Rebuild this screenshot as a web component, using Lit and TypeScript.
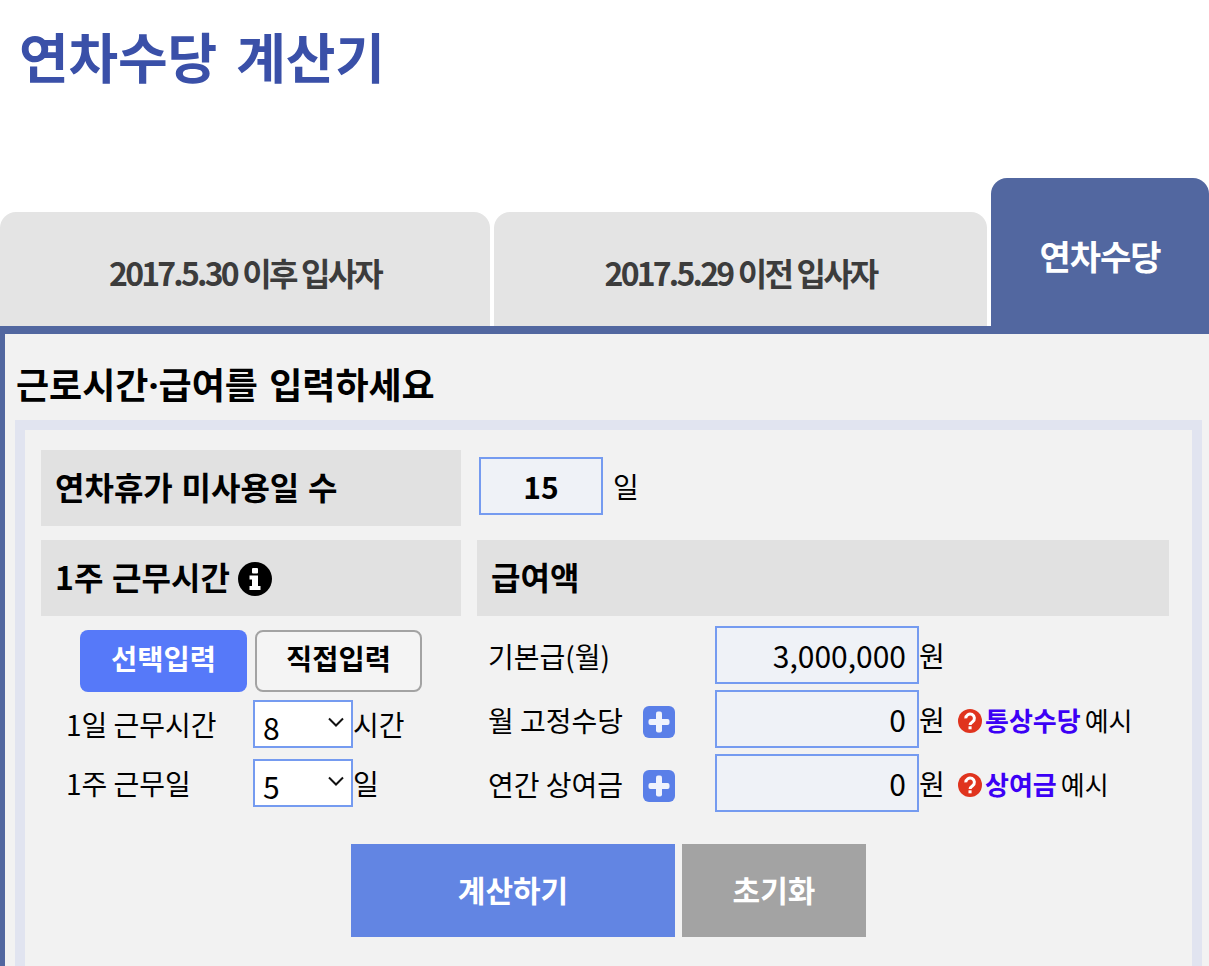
import { LitElement, html, css } from "lit";
import { customElement } from "lit/decorators.js";

const plus = html`<svg class="plus" viewBox="0 0 32 32" width="32" height="32"><rect width="32" height="32" rx="6" fill="#5a7fe8"/><rect x="13" y="5.500" width="6" height="21" rx="2" fill="#f0f3fd"/><rect x="5.500" y="13" width="21" height="6" rx="2" fill="#f0f3fd"/></svg>`;
const help = html`<svg class="help" viewBox="0 0 24 24" width="24" height="24"><circle cx="12" cy="12" r="12" fill="#e0341e"/><path d="M7.800 9.400a4.300 4.300 0 1 1 6.800 3.400c-1.600 1.100-2.500 1.600-2.500 3.200" fill="none" stroke="#fff" stroke-width="3"/><rect x="10.500" y="17.300" width="3.100" height="3" fill="#fff"/></svg>`;
const info = html`<svg class="info" viewBox="0 0 34 34" width="34" height="34"><circle cx="17" cy="17" r="17" fill="#000"/><rect x="14" y="6" width="6" height="5.500" rx="1" fill="#fff"/><path d="M11.500 13.500H20V24h2.500v4h-11v-4H14v-6.500h-2.500z" fill="#fff"/></svg>`;

@customElement("app-root")
export class AppRoot extends LitElement {
  static styles = css`
    :host {
      display: block;
      width: 1209px;
      height: 966px;
      overflow: hidden;
      background: #fff;
      font-family: "Noto Sans CJK KR", "Noto Sans", sans-serif;
      color: #000;
      font-size: 28px;
    }
    * { box-sizing: border-box; }
    h1 {
      margin: 0 0 0 19px;
      height: 178px;
      padding-top: 18px;
      font-size: 54px;
      line-height: 76px;
      font-weight: 700;
      color: #3a50a8;
      letter-spacing: -0.150px;
      word-spacing: 7px;
    }
    .tabs { display: flex; align-items: flex-end; gap: 4px; height: 148px; }
    .tab {
      height: 114px;
      width: 490px;
      background: #e4e4e4;
      border-radius: 16px 16px 0 0;
      display: flex;
      align-items: center;
      justify-content: center;
      font-size: 32px;
      font-weight: 700;
      color: #3c3c3c;
      letter-spacing: -2.800px;
      word-spacing: 1px;
      padding-top: 6px;
    }
    .tab.second { width: 493px; }
    .tab.active {
      width: 218px;
      height: 148px;
      background: #5267a0;
      color: #fff;
      font-size: 34px;
      letter-spacing: -1px;
      padding: 6px 0 0;
    }
    .panel {
      border-top: 8px solid #5267a0;
      border-left: 5px solid #5267a0;
      background: #f2f2f2;
      height: 640px;
      padding-left: 10px;
    }
    h2 {
      margin: 0;
      height: 86px;
      font-size: 36px;
      line-height: 98px;
      font-weight: 700;
      word-spacing: 3px;
      padding-left: 1px;
    }
    h2 span { font-family: "Noto Sans", sans-serif; }
    .box {
      width: 1187px;
      height: 600px;
      border: 10px solid #e1e4f0;
      padding: 20px 0 0 16px;
    }
    .row { display: flex; }
    .head {
      background: #e1e1e1;
      height: 76px;
      display: flex;
      align-items: center;
      gap: 8px;
      padding: 0 0 4px 14px;
      font-size: 32px;
      font-weight: 700;
      width: 420px;
      word-spacing: 1.500px;
    }
    .head.wide { width: 692px; margin-left: 16px; }
    .days { align-items: center; margin-bottom: 14px; }
    .days span { margin-bottom: 4px; }
    input {
      font: inherit;
      color: #000;
      border: 2px solid #759bf0;
      background: #eff2f7;
      border-radius: 0;
      outline: none;
      margin: 0;
    }
    .days input {
      width: 124px;
      height: 58px;
      margin: 0 10px 4px 18px;
      text-align: center;
      font-size: 30px;
      font-weight: 700;
    }
    .info { margin-top: 6px; }
    .columns { display: flex; }
    .left { width: 420px; padding-top: 14px; }
    .toggle { display: flex; gap: 8px; margin-left: 39px; margin-bottom: 8px; }
    .toggle div {
      width: 167px;
      height: 62px;
      border-radius: 8px;
      display: flex;
      align-items: center;
      justify-content: center;
      font-weight: 700;
      font-size: 28.500px;
      padding-bottom: 8px;
    }
    .on { background: #5679f9; color: #fff; }
    .off { background: #f4f4f4; border: 2px solid #a3a3a3; }
    .sel-row { display: flex; align-items: center; height: 48px; margin-bottom: 11px; }
    .sel-row label { width: 187px; margin-left: 25px; }
    .sel {
      width: 100px;
      height: 48px;
      background: #fff;
      border: 2px solid #759bf0;
      display: flex;
      align-items: center;
      justify-content: space-between;
      padding: 5px 6px 0 8px;
      font-size: 30px;
    }
    .sel svg { margin-bottom: 9px; }
    .right { margin-left: 16px; padding-top: 10px; }
    .line { display: flex; align-items: center; height: 58px; margin-bottom: 6px; }
    .line label {
      width: 238px;
      padding: 2px 0 0 11px;
      display: flex;
      align-items: center;
    }
    .plus { margin: 4px 0 0 20px; flex: none; }
    .line input {
      width: 204px;
      height: 58px;
      text-align: right;
      padding: 0 11px 0 0;
      font-size: 30px;
    }
    .won { width: 39px; }
    .hint { display: flex; align-items: center; font-size: 26px; }
    .help { margin: 4px 3px 0 0; }
    a { color: #3c00f5; font-weight: 700; text-decoration: none; margin-right: 4px; }
    .actions { display: flex; gap: 7px; margin: 26px 0 0 310px; }
    .actions div {
      height: 93px;
      display: flex;
      align-items: center;
      justify-content: center;
      color: #fff;
      font-weight: 700;
      font-size: 30px;
      padding-bottom: 4px;
    }
    .calc { width: 324px; background: #6285e3; }
    .reset { width: 184px; background: #a3a3a3; }
  `;

  private chevron() {
    return html`<svg width="18" height="10" viewBox="0 0 18 10"><path d="M2 1.500l7 7 7-7" fill="none" stroke="#111" stroke-width="2"/></svg>`;
  }

  render() {
    return html`
      <h1>연차수당 계산기</h1>
      <div class="tabs">
        <div class="tab">2017.5.30 이후 입사자</div>
        <div class="tab second">2017.5.29 이전 입사자</div>
        <div class="tab active">연차수당</div>
      </div>
      <div class="panel">
        <h2>근로시간<span>·</span>급여를 입력하세요</h2>
        <div class="box">
          <div class="row days">
            <div class="head">연차휴가 미사용일 수</div>
            <input value="15" />
            <span>일</span>
          </div>
          <div class="row">
            <div class="head">1주 근무시간 ${info}</div>
            <div class="head wide">급여액</div>
          </div>
          <div class="columns">
            <div class="left">
              <div class="toggle"><div class="on">선택입력</div><div class="off">직접입력</div></div>
              <div class="sel-row"><label>1일 근무시간</label><div class="sel">8 ${this.chevron()}</div><span>시간</span></div>
              <div class="sel-row"><label>1주 근무일</label><div class="sel">5 ${this.chevron()}</div><span>일</span></div>
            </div>
            <div class="right">
              <div class="line"><label>기본급(월)</label><input value="3,000,000" /><span class="won">원</span></div>
              <div class="line"><label>월 고정수당 ${plus}</label><input value="0" /><span class="won">원</span>
                <span class="hint">${help}<a>통상수당</a>예시</span></div>
              <div class="line"><label>연간 상여금 ${plus}</label><input value="0" /><span class="won">원</span>
                <span class="hint">${help}<a>상여금</a>예시</span></div>
            </div>
          </div>
          <div class="actions"><div class="calc">계산하기</div><div class="reset">초기화</div></div>
        </div>
      </div>
    `;
  }
}
